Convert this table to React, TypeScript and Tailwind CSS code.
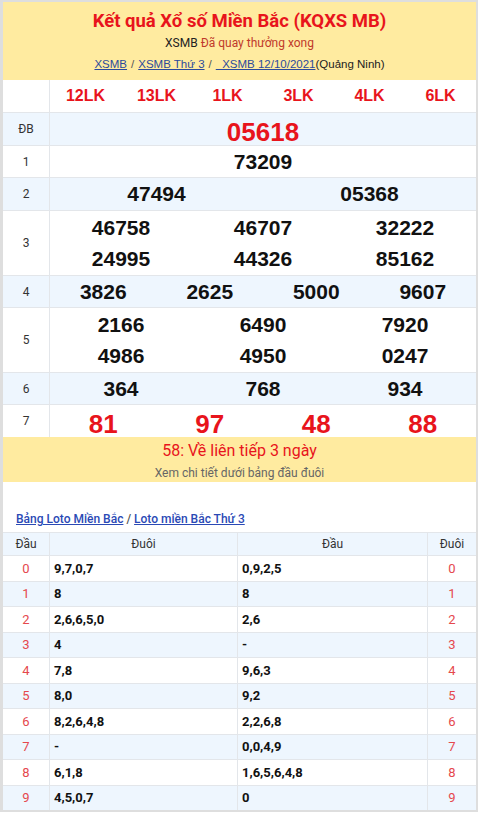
import React from "react";

const num = { fontFamily: '"Liberation Sans", Arial, sans-serif' } as const;
const rob = { fontFamily: 'Roboto, "Liberation Sans", Arial, sans-serif' } as const;

function Row({ label, h, bg, children }: { label: string; h: string; bg: string; children: React.ReactNode }) {
  return (
    <div className={`flex border-t border-[#e3e6ea] ${bg} ${h}`}>
      <div className="w-[47px] shrink-0 border-r border-[#e3e6ea] flex items-center justify-center text-[12px] text-[#333]" style={rob}>
        {label}
      </div>
      <div className="flex-1 flex flex-col">{children}</div>
    </div>
  );
}

function Nums({ items, cls }: { items: string[]; cls: string }) {
  return (
    <div className="flex-1 flex items-center">
      {items.map((n, i) => (
        <div key={i} className={`flex-1 text-center font-bold ${cls}`} style={num}>
          {n}
        </div>
      ))}
    </div>
  );
}

const loto: [string, string, string, string][] = [
  ["0", "9,7,0,7", "0,9,2,5", "0"],
  ["1", "8", "8", "1"],
  ["2", "2,6,6,5,0", "2,6", "2"],
  ["3", "4", "-", "3"],
  ["4", "7,8", "9,6,3", "4"],
  ["5", "8,0", "9,2", "5"],
  ["6", "8,2,6,4,8", "2,2,6,8", "6"],
  ["7", "-", "0,0,4,9", "7"],
  ["8", "6,1,8", "1,6,5,6,4,8", "8"],
  ["9", "4,5,0,7", "0", "9"],
];

export default function App() {
  return (
    <div className="w-[480px] h-[813px] bg-white overflow-hidden">
      <div className="w-[478px] border-l-[3px] border-t-2 border-r-2 border-b-2 border-[#dedede] bg-white">
        {/* header */}
        <div className="bg-[#ffeba0] h-[78px] flex flex-col items-center" style={rob}>
          <div className="mt-[7px] text-[18.5px] leading-[24px] font-bold text-[#e8141c]" style={rob}>
            Kết quả Xổ số Miền Bắc (KQXS MB)
          </div>
          <div className="mt-[2px] text-[12px] leading-[16px]">
            <span className="text-[#222]">XSMB </span>
            <span className="text-[#c0392b]">Đã quay thưởng xong</span>
          </div>
          <div className="mt-[5px] text-[11.5px] leading-[16px] text-[#555]" style={num}>
            <span className="underline text-[#2c4a9c]">XSMB</span>
            <span className="mx-[4px]">/</span>
            <span className="underline text-[#2c4a9c]">XSMB Thứ 3</span>
            <span className="mx-[4px]">/</span>
            <span className="underline text-[#2c4a9c]"> &nbsp;XSMB 12/10/2021</span>
            <span className="text-[#222]">(Quảng Ninh)</span>
          </div>
        </div>
        {/* results */}
        <div className="flex h-[32px] bg-white">
          <div className="w-[47px] shrink-0 border-r border-[#e3e6ea]" />
          <Nums items={["12LK", "13LK", "1LK", "3LK", "4LK", "6LK"]} cls="text-[16px] text-[#e8141c]" />
        </div>
        <Row label="ĐB" h="h-[33px]" bg="bg-[#eef6fe]">
          <Nums items={["05618"]} cls="text-[26px] text-[#e8141c]" />
        </Row>
        <Row label="1" h="h-[32px]" bg="bg-white">
          <Nums items={["73209"]} cls="text-[21px] text-[#111]" />
        </Row>
        <Row label="2" h="h-[33px]" bg="bg-[#eef6fe]">
          <Nums items={["47494", "05368"]} cls="text-[21px] text-[#111]" />
        </Row>
        <Row label="3" h="h-[65px]" bg="bg-white">
          <div className="h-[4px]" />
          <Nums items={["46758", "46707", "32222"]} cls="text-[21px] text-[#111]" />
          <Nums items={["24995", "44326", "85162"]} cls="text-[21px] text-[#111]" />
          <div className="h-[4px]" />
        </Row>
        <Row label="4" h="h-[32px]" bg="bg-[#eef6fe]">
          <Nums items={["3826", "2625", "5000", "9607"]} cls="text-[21px] text-[#111]" />
        </Row>
        <Row label="5" h="h-[65px]" bg="bg-white">
          <div className="h-[4px]" />
          <Nums items={["2166", "6490", "7920"]} cls="text-[21px] text-[#111]" />
          <Nums items={["4986", "4950", "0247"]} cls="text-[21px] text-[#111]" />
          <div className="h-[4px]" />
        </Row>
        <Row label="6" h="h-[32px]" bg="bg-[#eef6fe]">
          <Nums items={["364", "768", "934"]} cls="text-[21px] text-[#111]" />
        </Row>
        <Row label="7" h="h-[33px]" bg="bg-white">
          <Nums items={["81", "97", "48", "88"]} cls="text-[26px] text-[#e8141c]" />
        </Row>
        {/* banner */}
        <div className="bg-[#ffeba0] h-[45px] flex flex-col items-center" style={rob}>
          <div className="mt-[4px] text-[16px] leading-[20px] text-[#e8141c]">58: Về liên tiếp 3 ngày</div>
          <div className="mt-[4px] text-[12px] leading-[16px] text-[#666]">Xem chi tiết dưới bảng đầu đuôi</div>
        </div>
        <div className="h-[28px]" />
        <div className="pl-[13px] h-[22px] text-[12px] font-medium text-[#2a49b5]" style={rob}>
          <span className="underline">Bảng Loto Miền Bắc</span>
          <span className="text-[#555] no-underline"> / </span>
          <span className="underline">Loto miền Bắc Thứ 3</span>
        </div>
        {/* loto table */}
        <div className="border-t border-[#e3e6ea]" style={rob}>
          <div className="flex h-[22px] bg-[#eef6fe] text-[12px] text-[#333]">
            <div className="w-[47px] flex items-center justify-center border-r border-[#e3e6ea]">Đầu</div>
            <div className="w-[188px] flex items-center justify-center border-r border-[#e3e6ea]">Đuôi</div>
            <div className="w-[190px] flex items-center justify-center border-r border-[#e3e6ea]">Đầu</div>
            <div className="flex-1 flex items-center justify-center">Đuôi</div>
          </div>
          {loto.map((r, i) => (
            <div key={i} className={`flex h-[25.5px] border-t border-[#e3e6ea] text-[13px] ${i % 2 === 1 ? "bg-[#eef6fe]" : "bg-white"}`}>
              <div className="w-[47px] flex items-center justify-center border-r border-[#e3e6ea] text-[#e5484d]">{r[0]}</div>
              <div className="w-[188px] flex items-center pl-[4px] border-r border-[#e3e6ea] font-bold text-[#111]">{r[1]}</div>
              <div className="w-[190px] flex items-center pl-[4px] border-r border-[#e3e6ea] font-bold text-[#111]">{r[2]}</div>
              <div className="flex-1 flex items-center justify-center text-[#e5484d]">{r[3]}</div>
            </div>
          ))}
        </div>
      </div>
    </div>
  );
}
